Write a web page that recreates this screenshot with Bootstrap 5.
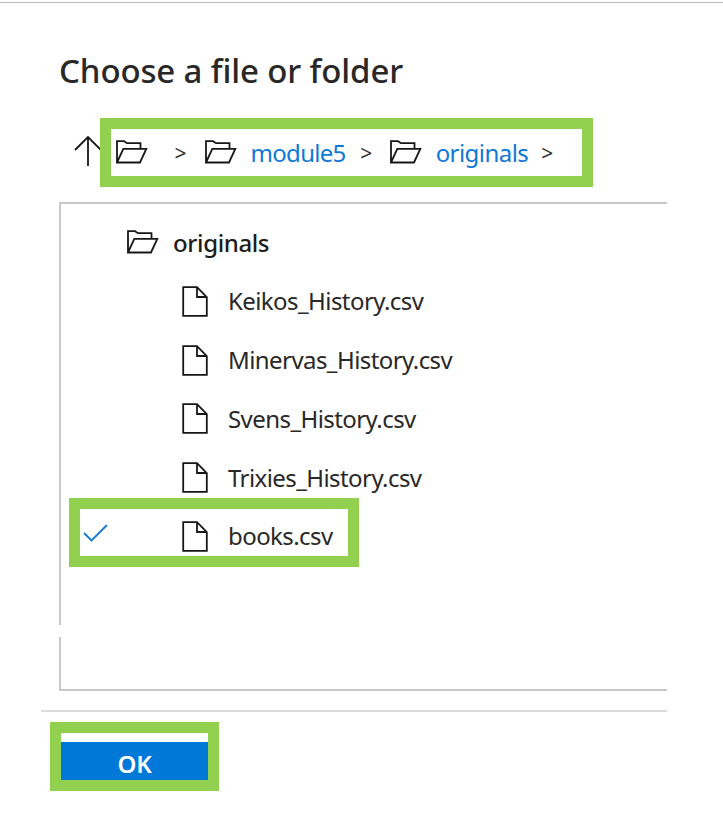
<!DOCTYPE html>
<html lang="en">
<head>
<meta charset="utf-8">
<meta name="viewport" content="width=device-width, initial-scale=1">
<title>Choose a file or folder</title>
<link href="https://cdn.jsdelivr.net/npm/bootstrap@5.3.0/dist/css/bootstrap.min.css" rel="stylesheet">
<style>
body{font-family:"Noto Sans","Open Sans",sans-serif;font-size:24px;line-height:32px;color:#292827;background:#fff;height:833px;overflow:hidden;white-space:nowrap}
svg{fill:none;stroke:#171717;stroke-width:1.8;flex:none;display:block}
a{color:#1078d6}
.topline{height:3px;border-bottom:1px solid #b9b9b9}
.heading{font-size:33px;line-height:44px;font-weight:500;margin:46px 0 0 59px;letter-spacing:-.13px}
.pathbar{margin:25px 0 0 74px;height:69px}
.up-arrow{margin:18px -1px 0 0}
.frame{border:11px solid #92d050}
.crumbs{width:493px;height:69px;background:#fff;padding-left:4.5px}
.crumbs svg,.folder-row svg{margin-bottom:2px}
.sep{font-size:21px;color:#333}
.s1{margin-left:27px}
.f2{margin-left:18px}
.c1{margin-left:14px;letter-spacing:-.7px}
.s2{margin-left:14.5px}
.f3{margin-left:17.5px}
.c2{margin-left:14px;letter-spacing:-.55px}
.s3{margin-left:13px}
.filebox{margin:15px 56px 0 59px;height:489px;border:2px solid #c8c8c8;border-right:0}
.break{left:-3px;top:421px;width:6px;height:12px;background:#fff}
.folder-row{height:39px;margin-top:19px;padding-left:66px;font-weight:500;color:#1c1c1c;letter-spacing:-.38px}
.folder-row svg{margin-right:14px}
.file-row{height:58.75px;padding-left:121px;letter-spacing:-.57px}
.file-row svg{margin-right:20px}
.list-files{margin-top:10px}
.tick{left:22px;top:17px}
.pick{left:8px;top:-9px;width:290px;height:69px}
.rule{margin:19px 56px 0 41px;height:2px;background:#dcdcdc}
.okframe{margin:10px 0 0 50px;width:169px;height:69px;padding-top:9px}
.okbtn{width:100%;height:38px;background:#0078d7;color:#fff;border:0;border-radius:0;font-size:24px;line-height:32px;padding:5px 0 0;font-weight:600;letter-spacing:-.3px}
</style>
</head>
<body>
<svg class="d-none">
<symbol id="folder" viewBox="0 0 32 24"><path d="M1 22.5V1.2H8L11 3.2H24.5V8.6M1 22.5 7.3 8.8H30.3L24 22.5Z"/></symbol>
<symbol id="file" viewBox="0 0 26 31"><path d="M1.2 1.2H15L24.8 11V29.8H1.2ZM15 1.2V11H24.8"/></symbol>
</svg>
<div class="topline"></div>
<h1 class="heading">Choose a file or folder</h1>
<nav class="pathbar d-flex">
<svg class="up-arrow" width="27" height="32" viewBox="0 0 27 32"><path d="M14 30V1M1 14 14 1 27 14"/></svg>
<div class="frame crumbs d-flex align-items-center">
<svg width="32" height="24"><use href="#folder"/></svg>
<span class="sep s1">&gt;</span>
<svg class="f2" width="32" height="24"><use href="#folder"/></svg>
<a class="text-decoration-none c1" href="#">module5</a>
<span class="sep s2">&gt;</span>
<svg class="f3" width="32" height="24"><use href="#folder"/></svg>
<a class="text-decoration-none c2" href="#">originals</a>
<span class="sep s3">&gt;</span>
</div>
</nav>
<main class="filebox position-relative">
<div class="break position-absolute"></div>
<div class="folder-row d-flex align-items-center"><svg width="32" height="24"><use href="#folder"/></svg><span>originals</span></div>
<ul class="list-unstyled list-files mb-0">
<li class="file-row d-flex align-items-center"><svg width="26" height="31"><use href="#file"/></svg><span>Keikos_History.csv</span></li>
<li class="file-row d-flex align-items-center"><svg width="26" height="31"><use href="#file"/></svg><span>Minervas_History.csv</span></li>
<li class="file-row d-flex align-items-center"><svg width="26" height="31"><use href="#file"/></svg><span>Svens_History.csv</span></li>
<li class="file-row d-flex align-items-center"><svg width="26" height="31"><use href="#file"/></svg><span>Trixies_History.csv</span></li>
<li class="file-row d-flex align-items-center position-relative"><svg class="tick position-absolute" width="25" height="18" viewBox="0 0 25 18"><path stroke="#1078d6" d="M1 9 8.5 16.5 24 1"/></svg><svg width="26" height="31"><use href="#file"/></svg><span>books.csv</span><div class="frame pick position-absolute"></div></li>
</ul>
</main>
<div class="rule"></div>
<div class="frame okframe"><button class="btn okbtn">OK</button></div>
<script src="https://cdn.jsdelivr.net/npm/bootstrap@5.3.0/dist/js/bootstrap.bundle.min.js"></script>
</body>
</html>
